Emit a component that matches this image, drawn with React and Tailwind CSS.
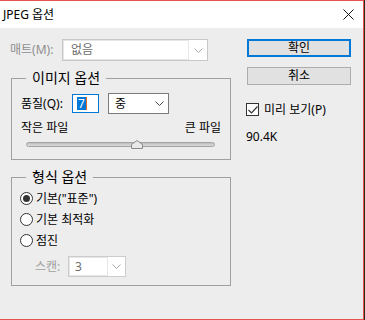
import React from 'react';

const font = "font-['Noto_Sans','Noto_Sans_CJK_KR',sans-serif]";

const Chevron = ({ color = '#333' }) => (
    <svg width="9" height="5" viewBox="0 0 9 5" fill="none">
        <path d="M0.5 0.5L4.5 4.5L8.5 0.5" stroke={color} strokeWidth="1" />
    </svg>
);

const Radio = ({ checked, label }) => (
    <div className="flex items-center h-[21px]">
        <div className="w-[13px] h-[13px] rounded-full border border-[#333] bg-white flex items-center justify-center">
            {checked && <div className="w-[7px] h-[7px] rounded-full bg-[#333]"></div>}
        </div>
        <span className="ml-[3px] text-[12px] leading-[16px] text-black">{label}</span>
    </div>
);

export default function App() {
    return (
        <div className={`w-[365px] h-[320px] flex ${font}`}>
            <div className="w-[364px] h-[320px] flex flex-col border-t border-r border-b border-[#e84f4f]">
                {/* Title bar */}
                <div className="h-[27px] bg-white flex items-center justify-between pl-[3px] pr-[9px]">
                    <span className="text-[12px] leading-[16px] text-black">JPEG 옵션</span>
                    <svg width="11" height="11" viewBox="0 0 11 11" fill="none">
                        <path d="M0.5 0.5L10.5 10.5M10.5 0.5L0.5 10.5" stroke="#111" strokeWidth="1" />
                    </svg>
                </div>

                {/* Body */}
                <div className="flex-1 bg-[#ededed] flex">
                    {/* Left column */}
                    <div className="w-[231px] pl-[10px] flex flex-col">
                        <div className="mt-[11px] flex items-center h-[22px]">
                            <span className="w-[52px] text-[12px] leading-[16px] text-[#8f8f8f]">매트(M):</span>
                            <div className="w-[146px] h-[22px] border border-[#c8c8c8] bg-white flex">
                                <div className="flex-1 border border-[#e6e6e6] flex items-center pl-[7px] text-[12px] leading-[16px] text-[#6d6d6d]">없음</div>
                                <div className="w-[18px] flex items-center justify-center">
                                    <Chevron color="#a8a8a8" />
                                </div>
                            </div>
                        </div>

                        <fieldset className="mt-[8px] ml-[1px] w-[220px] border border-[#a0a0a0] pl-[9px] pr-[9px] pb-[11px]">
                            <legend className="ml-[5px] px-[6px] text-[14px] leading-[18px] text-black">이미지 옵션</legend>
                            <div className="mt-[6px] flex items-center h-[21px]">
                                <span className="w-[51px] text-[12px] leading-[16px] text-black">품질(Q):</span>
                                <div className="w-[27px] h-[19px] border border-[#0078d7] bg-white flex items-center pl-[4px]">
                                    <span className="bg-[#0078d7] text-white text-[12px] leading-[13px] px-[1px]">7</span>
                                    <div className="w-[1px] h-[13px] bg-[#e07020]"></div>
                                </div>
                                <div className="ml-[9px] w-[61px] h-[21px] border border-[#7a7a7a] bg-white flex items-center justify-between pl-[6px] pr-[4px]">
                                    <span className="text-[12px] leading-[16px] text-black">중</span>
                                    <Chevron color="#444" />
                                </div>
                            </div>
                            <div className="mt-[6px] h-[16px] flex justify-between text-[12px] leading-[16px] text-black">
                                <span>작은 파일</span>
                                <span>큰 파일</span>
                            </div>
                            <div className="mt-[4px] ml-[5px] w-[189px] h-[8px] relative flex items-center">
                                <div className="w-full h-[5px] rounded-full border border-[#a4a4a4] bg-gradient-to-b from-[#bdbdbd] to-[#dcdcdc]"></div>
                                <svg className="absolute left-[105px] top-0" width="12" height="9" viewBox="0 0 12 9" fill="none">
                                    <path d="M0.5 8.5V4.5L6 0.5L11.5 4.5V8.5Z" fill="#e8e8e8" stroke="#8a8a8a" strokeWidth="1" />
                                </svg>
                            </div>
                        </fieldset>

                        <fieldset className="mt-[8px] ml-[1px] w-[220px] border border-[#a0a0a0] pl-[8px] pr-[9px] pb-[8px]">
                            <legend className="ml-[6px] px-[6px] text-[14px] leading-[18px] text-black">형식 옵션</legend>
                            <div className="mt-[2px] flex flex-col">
                                <Radio checked label={'기본("표준")'} />
                                <Radio label="기본 최적화" />
                                <Radio label="점진" />
                            </div>
                            <div className="mt-[5px] ml-[15px] flex items-center h-[21px]">
                                <span className="w-[33px] text-[12px] leading-[16px] text-[#a0a0a0]">스캔:</span>
                                <div className="w-[58px] h-[21px] border border-[#cccccc] bg-white flex">
                                    <div className="flex-1 border border-[#e6e6e6] flex items-center pl-[5px] text-[12px] leading-[16px] text-[#6d6d6d]">3</div>
                                    <div className="w-[17px] flex items-center justify-center">
                                        <Chevron color="#a8a8a8" />
                                    </div>
                                </div>
                            </div>
                        </fieldset>
                    </div>

                    {/* Right column */}
                    <div className="ml-[16px] w-[104px] flex flex-col">
                        <button className="mt-[11px] h-[18px] w-[104px] border-2 border-[#0078d7] bg-[#e1e1e1] flex items-center justify-center text-[12px] leading-[14px] text-black">
                            확인
                        </button>
                        <button className="mt-[10px] h-[18px] w-[104px] border border-[#adadad] bg-[#e1e1e1] flex items-center justify-center text-[12px] leading-[14px] text-black">
                            취소
                        </button>
                        <div className="mt-[18px] -ml-[1px] flex items-center h-[13px]">
                            <div className="w-[13px] h-[13px] border border-[#333] bg-white flex items-center justify-center">
                                <svg width="10" height="8" viewBox="0 0 10 8" fill="none">
                                    <path d="M0.5 4L3.5 7L9.5 0.5" stroke="#333" strokeWidth="1.2" />
                                </svg>
                            </div>
                            <span className="ml-[5px] text-[12px] leading-[16px] text-black">미리 보기(P)</span>
                        </div>
                        <span className="mt-[13px] -ml-[1px] text-[12px] leading-[16px] text-black">90.4K</span>
                    </div>
                </div>
            </div>
            <div className="w-[1px] h-[320px] bg-[#2e2d18]"></div>
        </div>
    );
}
